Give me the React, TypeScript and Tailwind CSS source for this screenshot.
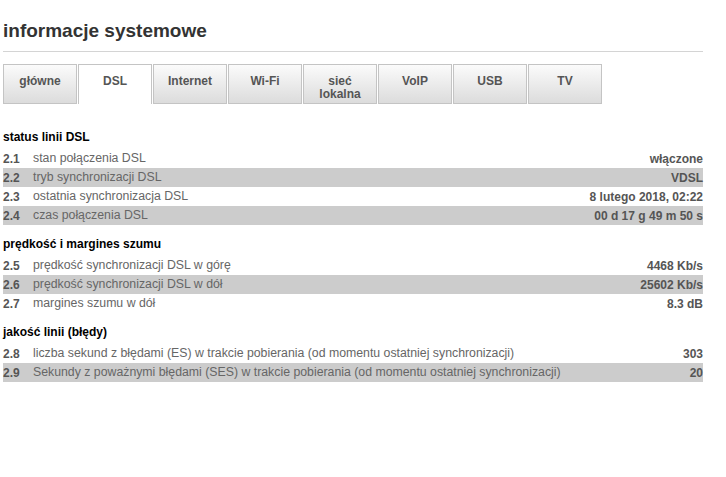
import React from "react";

const tabs = ["główne", "DSL", "Internet", "Wi-Fi", "sieć lokalna", "VoIP", "USB", "TV"];

type Row = { n: string; label: string; value: string };

const sections: { title: string; rows: Row[] }[] = [
  {
    title: "status linii DSL",
    rows: [
      { n: "2.1", label: "stan połączenia DSL", value: "włączone" },
      { n: "2.2", label: "tryb synchronizacji DSL", value: "VDSL" },
      { n: "2.3", label: "ostatnia synchronizacja DSL", value: "8 lutego 2018, 02:22" },
      { n: "2.4", label: "czas połączenia DSL", value: "00 d 17 g 49 m 50 s" },
    ],
  },
  {
    title: "prędkość i margines szumu",
    rows: [
      { n: "2.5", label: "prędkość synchronizacji DSL w górę", value: "4468 Kb/s" },
      { n: "2.6", label: "prędkość synchronizacji DSL w dół", value: "25602 Kb/s" },
      { n: "2.7", label: "margines szumu w dół", value: "8.3 dB" },
    ],
  },
  {
    title: "jakość linii (błędy)",
    rows: [
      {
        n: "2.8",
        label: "liczba sekund z błędami (ES) w trakcie pobierania (od momentu ostatniej synchronizacji)",
        value: "303",
      },
      {
        n: "2.9",
        label: "Sekundy z poważnymi błędami (SES) w trakcie pobierania (od momentu ostatniej synchronizacji)",
        value: "20",
      },
    ],
  },
];

export default function App() {
  return (
    <div className="min-h-screen bg-white font-['Liberation_Sans',Arial,sans-serif]">
      <div className="ml-[3px] w-[700px]">
        {/* Header */}
        <h1 className="pt-[19px] text-[19px] font-bold leading-[24px] text-[#333]">
          informacje systemowe
        </h1>
        <div className="mt-[8px] border-t border-[#d4d4d4]" />

        {/* Tabs */}
        <div className="mt-[12px] flex gap-[1px]">
          {tabs.map((t) => {
            const active = t === "DSL";
            return (
              <div
                key={t}
                className={
                  active
                    ? "h-[40px] w-[74px] border border-b-0 border-[#c4c4c4] bg-white pt-[10px] text-center text-[12px] font-bold leading-[13px] text-[#555]"
                    : "h-[40px] w-[74px] border border-[#c4c4c4] bg-gradient-to-b from-[#fbfbfb] to-[#dcdcdc] pt-[10px] text-center text-[12px] font-bold leading-[13px] text-[#555]"
                }
              >
                {t === "sieć lokalna" ? (
                  <>
                    sieć
                    <br />
                    lokalna
                  </>
                ) : (
                  t
                )}
              </div>
            );
          })}
        </div>

        {/* Sections */}
        <div className="mt-[25px]">
          {sections.map((s, si) => (
            <section key={s.title} className={si === 0 ? "" : "mt-[11px]"}>
              <h2 className="mb-[4px] text-[12px] font-bold leading-[16px] text-black">{s.title}</h2>
              {s.rows.map((r, i) => (
                <div
                  key={r.n}
                  className={
                    i % 2 === 1
                      ? "flex h-[19px] items-center bg-[#cccccc] text-[12px]"
                      : "flex h-[19px] items-center text-[12px]"
                  }
                >
                  <span className="w-[30px] font-bold text-[#555]">{r.n}</span>
                  <span className="text-[12.3px] text-[#666]">{r.label}</span>
                  <span className="ml-auto font-bold text-[#555]">{r.value}</span>
                </div>
              ))}
            </section>
          ))}
        </div>
      </div>
    </div>
  );
}
